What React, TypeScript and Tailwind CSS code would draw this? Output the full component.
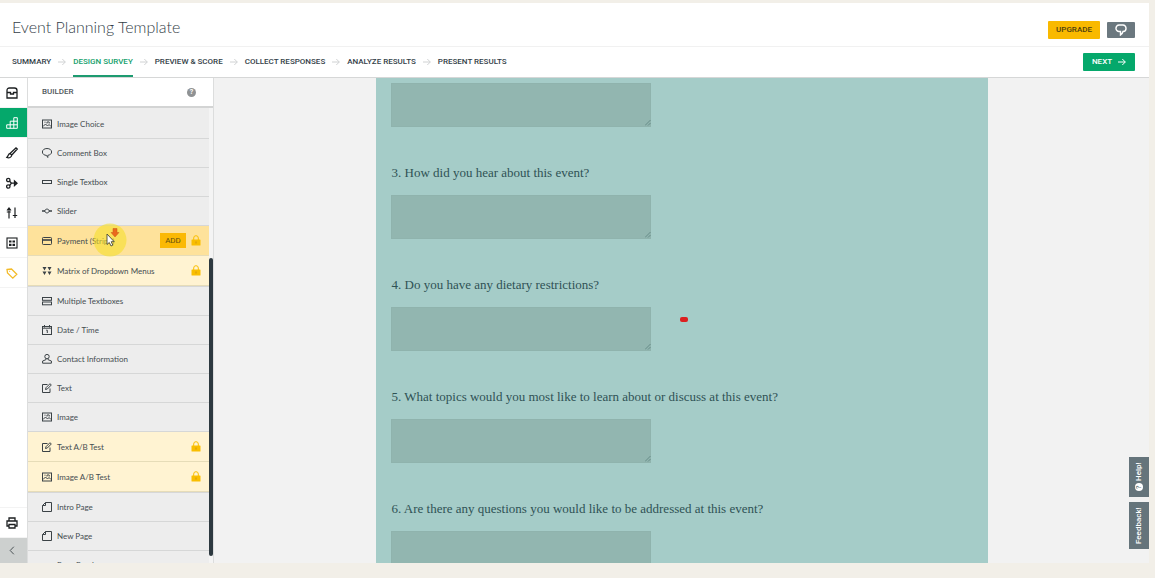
import type { ReactNode } from "react";
import { clsx } from "clsx";

type IconName =
  | "image"
  | "comment"
  | "textbox"
  | "slider"
  | "card"
  | "matrix"
  | "multi"
  | "date"
  | "contact"
  | "text"
  | "page"
  | "break";

interface BuilderItem {
  label: string;
  icon: IconName;
  hovered?: boolean;
}

interface BuilderGroup {
  locked: boolean;
  items: BuilderItem[];
}

const steps = [
  "SUMMARY",
  "DESIGN SURVEY",
  "PREVIEW & SCORE",
  "COLLECT RESPONSES",
  "ANALYZE RESULTS",
  "PRESENT RESULTS",
];

const groups: BuilderGroup[] = [
  {
    locked: false,
    items: [
      { label: "Image Choice", icon: "image" },
      { label: "Comment Box", icon: "comment" },
      { label: "Single Textbox", icon: "textbox" },
      { label: "Slider", icon: "slider" },
    ],
  },
  {
    locked: true,
    items: [
      { label: "Payment (Stripe)", icon: "card", hovered: true },
      { label: "Matrix of Dropdown Menus", icon: "matrix" },
    ],
  },
  {
    locked: false,
    items: [
      { label: "Multiple Textboxes", icon: "multi" },
      { label: "Date / Time", icon: "date" },
      { label: "Contact Information", icon: "contact" },
      { label: "Text", icon: "text" },
      { label: "Image", icon: "image" },
    ],
  },
  {
    locked: true,
    items: [
      { label: "Text A/B Test", icon: "text" },
      { label: "Image A/B Test", icon: "image" },
    ],
  },
  {
    locked: false,
    items: [
      { label: "Intro Page", icon: "page" },
      { label: "New Page", icon: "page" },
      { label: "Page Break", icon: "break" },
    ],
  },
];

const questions = [
  "3. How did you hear about this event?",
  "4. Do you have any dietary restrictions?",
  "5. What topics would you most like to learn about or discuss at this event?",
  "6. Are there any questions you would like to be addressed at this event?",
];

const itemIcons: Record<IconName, ReactNode> = {
  image: (
    <>
      <rect x="0.5" y="1" width="9" height="8" />
      <path d="M1 7.5 3.5 5l2 2L7 5.5 9 7.5M2.5 3.2h1M5 4.5a1.2 1.2 0 1 1 2.2 0" />
    </>
  ),
  comment: <path d="M5 .5C2.3 .5 .4 1.9 .4 4S2.300 7.300 4.500 7.400L5.800 9.500V7.300C8 7 9.600 5.900 9.600 4 9.600 1.900 7.700 .5 5 .5Z" />,
  textbox: <rect x="0.5" y="3.5" width="9" height="3" />,
  slider: (
    <>
      <path d="M0 5h3M7 5h3" strokeWidth="1.6" />
      <path d="M2.500 5 4.3 3h1.4L7.500 5 5.700 7H4.3Z" />
    </>
  ),
  card: (
    <>
      <rect x="0.5" y="1.5" width="9" height="7" rx="0.8" />
      <path d="M0.5 4h9" strokeWidth="1.6" />
    </>
  ),
  matrix: (
    <path
      d="M.500 1h4L2.500 4.500ZM5.500 1h4L7.500 4.500ZM.500 5.500h4L2.500 9ZM5.500 5.500h4L7.500 9Z"
      fill="currentColor"
      stroke="none"
    />
  ),
  multi: (
    <>
      <rect x="0.5" y="1.5" width="9" height="2.8" />
      <rect x="0.5" y="6" width="9" height="2.8" />
    </>
  ),
  date: (
    <>
      <rect x="0.5" y="1.5" width="9" height="8" />
      <path d="M2.5 0v2.5M7.5 0v2.5M0.5 3.2h9M4.2 5.2H5.3V8" />
    </>
  ),
  contact: (
    <>
      <circle cx="5" cy="2.6" r="2.2" />
      <path d="M3.9 4.7v1L.6 7v2.2h8.8V7L6.1 5.7v-1" />
    </>
  ),
  text: (
    <>
      <path d="M5.5 1.5h-5v8h7.5V5.5" />
      <path d="M3.5 6.5 4 4.7 8 .7l1.3 1.3-4 4Z" />
    </>
  ),
  page: <path d="M3.5 .5h6v9h-9v-6ZM3.5 .5v3h-3" />,
  break: <path d="M0 5h2.5M3.8 5h2.5M7.5 5H10" />,
};

function ItemIcon({ name }: { name: IconName }) {
  return (
    <svg
      viewBox="0 0 10 10"
      className="h-[10px] w-[10px] shrink-0 overflow-visible text-[#3b4246]"
      fill="none"
      stroke="currentColor"
      strokeWidth="1"
    >
      {itemIcons[name]}
    </svg>
  );
}

function LockIcon() {
  return (
    <svg viewBox="0 0 10 11" className="h-[11px] w-[10px] shrink-0">
      <path d="M2.7 5V3a2.3 2.3 0 0 1 4.6 0v2" fill="none" stroke="#f9be00" strokeWidth="1" />
      <rect x="0.5" y="4.5" width="9" height="6" rx="0.6" fill="#f9be00" />
      <path d="M5 6.5v2" stroke="#c98a12" strokeWidth="0.8" />
    </svg>
  );
}

function Arrow({ className }: { className: string }) {
  return (
    <svg viewBox="0 0 8 8" className={className} fill="none" stroke="currentColor">
      <path d="M0 4h7.3M4.3 1l3 3-3 3" />
    </svg>
  );
}

function RailButton({
  label,
  className,
  children,
}: {
  label: string;
  className?: string;
  children: ReactNode;
}) {
  return (
    <button
      aria-label={label}
      className={clsx("flex h-[30px] w-full shrink-0 items-center justify-center pr-1", className)}
    >
      <svg
        viewBox="0 0 12 12"
        className="h-3 w-3 overflow-visible"
        fill="none"
        stroke="currentColor"
        strokeWidth="1.3"
      >
        {children}
      </svg>
    </button>
  );
}

function Header() {
  return (
    <header className="flex h-11 shrink-0 items-center justify-between border-b border-[#f1f1f1] pr-[14px] pl-3">
      <h1 className="pt-1 font-[Lato,sans-serif] text-[16px] leading-5 font-light text-[#333e48]">
        Event Planning Template
      </h1>
      <div className="flex items-center gap-[7px] pt-[10px]">
        <button className="flex h-[18px] w-[52px] items-center justify-center rounded-[1px] bg-[#f9b900] text-[8px] font-medium text-[#4d3d10]">
          UPGRADE
        </button>
        <button
          aria-label="Comments"
          className="flex h-4 w-7 items-center justify-center rounded-[1px] bg-[#6b787f] text-white"
        >
          <svg viewBox="0 0 12 12" className="h-3 w-3" fill="none" stroke="currentColor" strokeWidth="1.4">
            <path d="M4 1h4a3 3.2 0 0 1 0 6.5Q7.5 9.5 5.5 11V7.5H4A3 3.2 0 0 1 4 1Z" />
          </svg>
        </button>
      </div>
    </header>
  );
}

function StepNav() {
  return (
    <nav className="flex h-[31px] shrink-0 items-stretch justify-between border-b border-[#d6d7d7] pr-[14px] pl-3">
      <ol className="flex items-stretch gap-[7px]">
        {steps.map((step, i) => (
          <li key={step} className="flex items-stretch gap-[7px]">
            {i > 0 && <Arrow className="h-2 w-2 self-center text-[#d0d2d3]" />}
            <a
              href="#"
              className={clsx(
                "flex items-center border-y-2 border-t-transparent text-[8px] font-medium whitespace-nowrap",
                step === "DESIGN SURVEY"
                  ? "border-b-[#1d9b70] text-[#14a06c]"
                  : "border-b-transparent text-[#333e48]",
              )}
            >
              {step}
            </a>
          </li>
        ))}
      </ol>
      <button className="flex h-[18px] w-[52px] items-center justify-center gap-[6px] self-center rounded-[1px] bg-[#05a86b] text-[8px] font-medium text-white">
        NEXT
        <Arrow className="h-2 w-2" />
      </button>
    </nav>
  );
}

function Rail() {
  return (
    <div className="flex w-[27px] shrink-0 flex-col divide-y divide-[#f3f3f3] bg-white text-[#1c1f21]">
      <RailButton label="Question bank">
        <path d="M1 5V3.5Q1 1 3.5 1h5Q11 1 11 3.5V11H1ZM1 5.5h3.5v1.5h3V5.5H11" />
      </RailButton>
      <RailButton label="Builder" className="bg-[#05a86b] text-white">
        <path
          d="M.7 7.800h10.600M.7 7.800v3.500h10.600V.7H7.800v10.600M4.200 4.200v7.100M4.200 4.200h7.100"
          strokeWidth="1"
        />
      </RailButton>
      <RailButton label="Style">
        <path d="M4 6.5 10 .8 11.3 2 5.8 8ZM4 6.5C2.5 6.5 2.5 8.5 .8 10.5 3 11.3 5.5 10.5 5.8 8" />
      </RailButton>
      <RailButton label="Logic">
        <circle cx="2.3" cy="3" r="1.7" />
        <circle cx="2.3" cy="9.5" r="1.7" />
        <path d="M3.6 4.2 5.5 6.2h5.5M3.6 8.5l1.9-2.3M8.5 4l2.5 2.2L8.5 8.5Z" />
      </RailButton>
      <RailButton label="Options">
        <path d="M3 1v10.5M1 3.5 3 1l2 2.5M.8 5h4M9 .5V11M6.8 8.5h4.4" strokeWidth="1.2" />
      </RailButton>
      <RailButton label="Format">
        <rect x="1" y="1" width="10" height="10" strokeWidth="1.1" />
        <path d="M3 4.5h2.5M6.5 4.5H9M3 7.8h2.5M6.5 7.8H9" strokeWidth="2.2" />
      </RailButton>
      <RailButton label="Offers" className="text-[#f3bb2a]">
        <path d="M1 2.5 5.5 2l5.3 5.2-4 4L1.5 6ZM3.3 4.3h.8" strokeWidth="1.3" />
      </RailButton>
      <div className="flex-1" />
      <RailButton label="Print">
        <path d="M3 4V1h6v3M3 9H1V4h10v5H9M3 7.5h6V11H3Z" />
      </RailButton>
      <button
        aria-label="Collapse"
        className="flex h-[25px] w-full shrink-0 items-center justify-center bg-[#cdd0cf] pr-1 text-[#3d4548]"
      >
        <svg viewBox="0 0 6 10" className="h-[9px] w-[6px]" fill="none" stroke="currentColor">
          <path d="M5 .8 1 5l4 4.2" />
        </svg>
      </button>
    </div>
  );
}

function BuilderRow({ item, locked }: { item: BuilderItem; locked: boolean }) {
  return (
    <li
      className={clsx(
        "relative flex items-center gap-[5px] border-b pr-[8px] pl-[14px]",
        locked ? "h-[30px] border-[#e6dcb8]" : "h-[29px] border-[#d6d7d7]",
        locked && (item.hovered ? "bg-[#fee29b]" : "bg-[#fff3d2]"),
      )}
    >
      <ItemIcon name={item.icon} />
      <span className="flex-1 font-[Lato,sans-serif] text-[8px] whitespace-nowrap text-[#454d51]">
        {item.label}
      </span>
      {item.hovered && (
        <button className="h-[15px] w-[26px] bg-[#fbb904] text-[8px] leading-[15px] text-[#66500f]">
          ADD
        </button>
      )}
      {locked && <LockIcon />}
      {item.hovered && <Pointer />}
    </li>
  );
}

function Pointer() {
  return (
    <svg
      viewBox="0 0 34 34"
      className="pointer-events-none absolute -top-[3px] left-[65px] z-10 h-[34px] w-[34px]"
    >
      <circle cx="17" cy="17" r="16.5" fill="#f5df2c" fillOpacity="0.6" />
      <path d="M20 5.5h4v4h2l-4 4.5-4-4.5h2Z" fill="#ea6a1c" stroke="#c9571a" strokeWidth="0.5" />
      <path
        d="M14 11v10.5l2.3-2 1.7 3.5 1.8-.8-1.6-3.5h3Z"
        fill="#fff"
        stroke="#4a4a32"
        strokeWidth="0.9"
      />
    </svg>
  );
}

function BuilderPanel() {
  return (
    <aside className="flex w-[187px] shrink-0 flex-col border-x border-[#dcdddd] bg-[#ededed]">
      <div className="flex h-[30px] shrink-0 items-center justify-between border-b-2 border-[#d3d4d4] bg-white pr-[17px] pl-[14px]">
        <h2 className="text-[8px] font-medium text-[#50585c]">BUILDER</h2>
        <button
          aria-label="Builder help"
          className="flex h-[9px] w-[9px] items-center justify-center rounded-full bg-[#8f9294] text-[7px] leading-none font-bold text-white"
        >
          ?
        </button>
      </div>
      <div className="flex min-h-0 flex-1">
        <div className="flex-1 overflow-hidden pt-[2px]">
          {groups.map((group, i) => (
            <ul key={i} className={clsx(group.locked && "border-b border-[#d6d7d7]")}>
              {group.items.map((item) => (
                <BuilderRow key={item.label} item={item} locked={group.locked} />
              ))}
            </ul>
          ))}
        </div>
        <div className="flex w-1 flex-col bg-[#f4f4f4] pt-[150px] pb-[7px]">
          <div className="flex-1 rounded-full bg-[#2d3940]" />
        </div>
      </div>
    </aside>
  );
}

function AnswerBox({ label }: { label: string }) {
  return (
    <div className="relative h-11 w-[260px] shrink-0">
      <textarea
        aria-label={label}
        className="block h-full w-full resize-none border border-[#8fb3ad] bg-[#92b6b0]"
      />
      <svg
        viewBox="0 0 6 6"
        className="pointer-events-none absolute right-0 bottom-px h-[6px] w-[6px] text-[#557b78]"
        fill="none"
        stroke="currentColor"
        strokeWidth="0.7"
      >
        <path d="M0 5.5 5.5 0M3 5.5 5.5 3" />
      </svg>
    </div>
  );
}

function Survey() {
  return (
    <main className="min-w-0 flex-1 overflow-hidden bg-[#f2f2f2]">
      <div className="mx-auto h-full max-w-[612px] overflow-hidden bg-[#a5ccc8] pt-[5px] pl-[15px]">
        <AnswerBox label="2." />
        {questions.map((question) => (
          <section key={question} className="flex flex-col gap-3 pt-9">
            <h3 className="pl-px font-[Liberation_Serif,serif] text-[13px] leading-5 text-[#2f5255]">
              {question}
            </h3>
            <div className="relative">
              <AnswerBox label={question} />
              {question.startsWith("4.") && (
                <span className="absolute top-[10px] left-[289px] h-[5px] w-2 rounded-[2px] bg-[#dc2020]" />
              )}
            </div>
          </section>
        ))}
      </div>
    </main>
  );
}

function SideTabs() {
  return (
    <div className="absolute right-0 bottom-[14px] flex flex-col gap-[5px] text-[8px] font-medium text-white">
      <button className="flex h-10 w-5 rotate-180 items-center justify-center gap-[2px] bg-[#65747b] [writing-mode:vertical-rl]">
        <span className="flex h-2 w-2 items-center justify-center rounded-full bg-white text-[7px] leading-none text-[#65747b]">
          ?
        </span>
        Help!
      </button>
      <button className="flex h-[47px] w-5 rotate-180 items-center justify-center bg-[#65747b] [writing-mode:vertical-rl]">
        Feedback!
      </button>
    </div>
  );
}

export default function App() {
  return (
    <div className="flex h-screen flex-col bg-[#f2efe8] pt-[3px] pr-[6px] pb-[15px] font-[Roboto,sans-serif]">
      <div className="relative flex min-h-0 flex-1 flex-col bg-white">
        <Header />
        <StepNav />
        <div className="flex min-h-0 flex-1">
          <Rail />
          <BuilderPanel />
          <Survey />
        </div>
        <SideTabs />
      </div>
    </div>
  );
}
